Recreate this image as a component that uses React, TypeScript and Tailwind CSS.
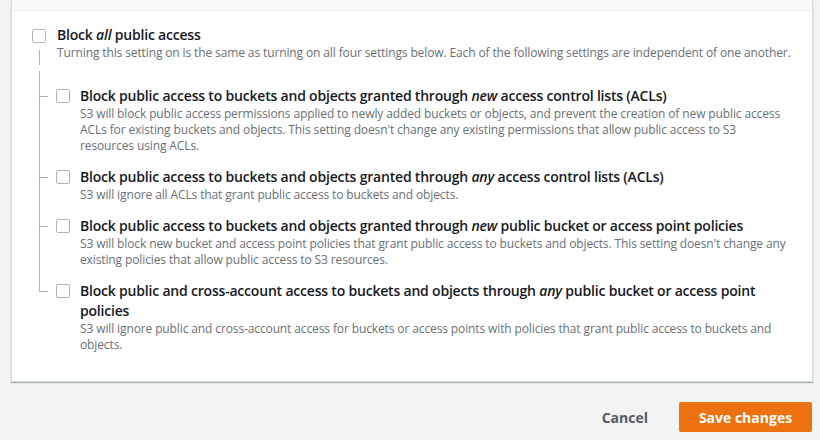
import React from "react";

interface Setting {
    title: React.ReactNode
    description: string
}

const settings: Setting[] = [
    {
        title: <>Block public access to buckets and objects granted through <i>new</i> access control lists (ACLs)</>,
        description: "S3 will block public access permissions applied to newly added buckets or objects, and prevent the creation of new public access ACLs for existing buckets and objects. This setting doesn't change any existing permissions that allow public access to S3 resources using ACLs.",
    },
    {
        title: <>Block public access to buckets and objects granted through <i>any</i> access control lists (ACLs)</>,
        description: "S3 will ignore all ACLs that grant public access to buckets and objects.",
    },
    {
        title: <>Block public access to buckets and objects granted through <i>new</i> public bucket or access point policies</>,
        description: "S3 will block new bucket and access point policies that grant public access to buckets and objects. This setting doesn't change any existing policies that allow public access to S3 resources.",
    },
    {
        title: <>Block public and cross-account access to buckets and objects through <i>any</i> public bucket or access point policies</>,
        description: "S3 will ignore public and cross-account access for buckets or access points with policies that grant public access to buckets and objects.",
    },
];

function Checkbox() {
    return <div className="h-[14px] w-[14px] shrink-0 rounded-[2px] border border-[#aab7b8] bg-white" />
}

function SettingRow({ setting, first, last }: { setting: Setting, first: boolean, last: boolean }) {
    const pad = first ? "pt-[15px]" : "pt-[13px]";
    return (
        <div className="flex">
            <div className="flex w-[17px] shrink-0 flex-col">
                <div className={`w-[9px] border-b border-l border-[#aab7b8] ${first ? "h-[26px]" : "h-[24px]"}`} />
                <div className={`flex-1 ${last ? "" : "border-l border-[#aab7b8]"}`} />
            </div>
            <div className={`flex flex-1 gap-[10px] pr-[22px] ${pad}`}>
                <div className="pt-[3px]"><Checkbox /></div>
                <div className="flex-1">
                    <p className="text-[14px] font-semibold leading-[20px] tracking-[-0.2px] text-[#16191f]">{setting.title}</p>
                    <p className="text-[12px] leading-[16px] tracking-[-0.12px] text-[#687078]">{setting.description}</p>
                </div>
            </div>
        </div>
    )
}

export default function App() {
    return (
        <div className="h-[440px] w-[820px] overflow-hidden bg-[#f2f3f3]" style={{ fontFamily: '"Open Sans", Arial, sans-serif' }}>
            <div className="ml-[11px] w-[802px] border-x border-b border-[#d5dbdb] bg-white shadow-[0_1px_1px_0_rgba(0,28,36,0.3)]">
                <div className="h-[11px] border-b border-[#eaeded] bg-[#fafafa]" />
                <div className="pb-[28px] pl-[20px]">
                    <div className="flex gap-[11px] pt-[14px]">
                        <div className="flex w-[14px] shrink-0 flex-col pt-[4px]">
                            <Checkbox />
                            <div className="ml-[7px] mt-[7px] h-[15px] border-l border-[#aab7b8]" />
                        </div>
                        <div>
                            <p className="text-[14px] font-semibold leading-[20px] tracking-[-0.2px] text-[#16191f]">Block <i>all</i> public access</p>
                            <p className="text-[12px] leading-[16px] tracking-[-0.12px] text-[#687078]">Turning this setting on is the same as turning on all four settings below. Each of the following settings are independent of one another.</p>
                        </div>
                    </div>
                    <div className="ml-[7px] mt-[6px]">
                        {settings.map((s, i) => (
                            <SettingRow key={i} setting={s} first={i === 0} last={i === settings.length - 1} />
                        ))}
                    </div>
                </div>
            </div>
            <div className="mt-[20px] flex items-center justify-end pr-[8px]">
                <button className="px-[20px] text-[14px] font-bold text-[#545b64]">Cancel</button>
                <button className="ml-[11px] h-[30px] w-[133px] rounded-[2px] bg-[#ec7211] text-[14px] font-bold text-white">Save changes</button>
            </div>
        </div>
    )
}
